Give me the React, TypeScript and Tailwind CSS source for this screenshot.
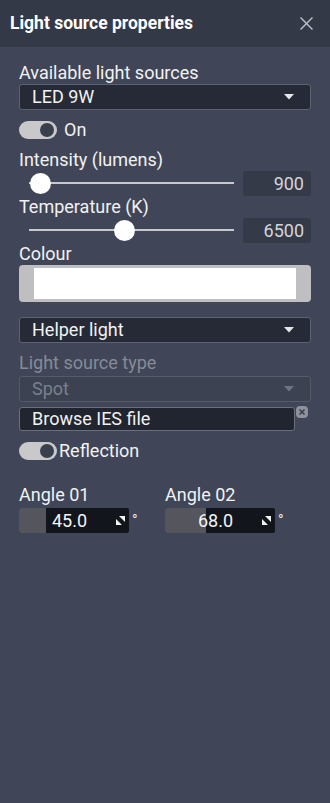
import React from "react";

const font = { fontFamily: "Roboto, 'Noto Sans', sans-serif" };

function Caret({ dim }: { dim?: boolean }) {
  return (
    <svg width="10" height="6" viewBox="0 0 10 6" className="shrink-0">
      <polygon points="0,0 10,0 5,5.5" fill={dim ? "#6f7480" : "#e6e7ea"} />
    </svg>
  );
}

function Select({ text, dim }: { text: string; dim?: boolean }) {
  return (
    <div
      className={
        "h-[26px] w-full rounded-[3px] border flex items-center pl-[12px] pr-[16px] justify-between " +
        (dim ? "border-[#545a68] bg-[#3c4252]" : "border-[#5d6270] bg-[#252a36]")
      }
    >
      <span className={"text-[18px] leading-[20px] " + (dim ? "text-[#7b808b]" : "text-[#f2f2f2]")}>{text}</span>
      <Caret dim={dim} />
    </div>
  );
}

function Toggle() {
  return (
    <div className="relative w-[38px] h-[18px] rounded-full bg-[#c9c9cb] shrink-0">
      <div className="absolute right-[1px] top-[0px] w-[18px] h-[18px] rounded-full bg-[#3a3f4c] border-[2px] border-[#c9c9cb]" />
    </div>
  );
}

function Slider({ pos, value }: { pos: number; value: string }) {
  return (
    <div className="flex items-center h-[25px]">
      <div className="relative w-[224px] h-[25px]">
        <div className="absolute left-[10px] right-[9px] top-[11px] h-[2px] bg-[#c8c9cd]" />
        <div
          className="absolute top-[2px] w-[21px] h-[21px] rounded-full bg-white"
          style={{ left: pos - 10.5 - 19 }}
        />
      </div>
      <div className="ml-auto w-[68px] h-[25px] rounded-[3px] bg-[#353a48] flex items-center justify-end pr-[7px] text-[18px] leading-[20px] text-[#d4d5d8]">
        {value}
      </div>
    </div>
  );
}

function Spinner() {
  return (
    <svg width="9" height="9" viewBox="0 0 9 9" className="shrink-0">
      <polygon points="3,0 9,0 9,6" fill="#f2f2f2" />
      <polygon points="0,3 0,9 6,9" fill="#f2f2f2" />
    </svg>
  );
}

function AngleInput({ label, value, fill }: { label: string; value: string; fill: number }) {
  return (
    <div className="flex flex-col w-[148px]">
      <div className="text-[18px] leading-[20px] text-[#f2f2f2] h-[20px]">{label}</div>
      <div className="mt-[3px] flex items-center">
        <div className="relative w-[110px] h-[25px] rounded-[2px] bg-[#13151c] overflow-hidden flex items-center">
          <div className="absolute left-0 top-0 bottom-0 bg-[#55565d]" style={{ width: fill }} />
          <div className="relative flex-1 text-center text-[18px] leading-[20px] text-[#f5f5f5] pl-[4px]">{value}</div>
          <div className="relative mr-[4px]">
            <Spinner />
          </div>
        </div>
        <span className="ml-[3px] text-[15px] leading-[15px] text-[#e8e8e8]">°</span>
      </div>
    </div>
  );
}

export default function App() {
  return (
    <div className="w-[330px] h-[803px] bg-[#404657] flex flex-col overflow-hidden" style={font}>
      <div className="h-[47px] bg-[#343947] flex items-center justify-between pl-[10px] pr-[17px] shrink-0">
        <span className="text-[17.5px] font-bold text-white leading-[20px] -mt-[2px]">Light source properties</span>
        <svg width="13" height="13" viewBox="0 0 13 13" className="-mt-[1px]">
          <line x1="0.5" y1="0.5" x2="12.5" y2="12.5" stroke="#b9bcc3" strokeWidth="1.5" />
          <line x1="12.5" y1="0.5" x2="0.5" y2="12.5" stroke="#b9bcc3" strokeWidth="1.5" />
        </svg>
      </div>

      <div className="flex flex-col pl-[19px] pr-[19px] pt-[16px]">
        <div className="text-[18px] leading-[20px] text-[#f2f2f2]">Available light sources</div>
        <div className="mt-[1px]">
          <Select text="LED 9W" />
        </div>
        <div className="mt-[11px] flex items-center gap-[7px] h-[18px]">
          <Toggle />
          <span className="text-[18px] leading-[20px] text-[#f2f2f2]">On</span>
        </div>

        <div className="mt-[11px] text-[18px] leading-[20px] text-[#f2f2f2]">Intensity (lumens)</div>
        <div className="mt-[1px]">
          <Slider pos={40.5} value="900" />
        </div>
        <div className="mt-[1px] text-[18px] leading-[20px] text-[#f2f2f2]">Temperature (K)</div>
        <div className="mt-[1px]">
          <Slider pos={124.5} value="6500" />
        </div>

        <div className="mt-[1px] text-[18px] leading-[20px] text-[#f2f2f2]">Colour</div>
        <div className="mt-[1px] h-[37px] w-full rounded-[4px] bg-[#bfbfc1] flex items-center px-[15px]">
          <div className="h-[31px] w-full bg-white" />
        </div>

        <div className="mt-[15px]">
          <Select text="Helper light" />
        </div>

        <div className="mt-[10px] text-[18px] leading-[20px] text-[#868b96]">Light source type</div>
        <div className="mt-[3px]">
          <Select text="Spot" dim />
        </div>

        <div className="mt-[5px] flex items-start">
          <div className="w-[276px] h-[24px] rounded-[3px] border border-[#6a6f7b] bg-[#21252f] flex items-center pl-[12px]">
            <span className="text-[18px] leading-[20px] text-[#f2f2f2]">Browse IES file</span>
          </div>
          <svg width="12" height="12" viewBox="0 0 12 12" className="ml-[1px] -mt-[1px]">
            <rect x="0" y="0" width="12" height="12" rx="4" fill="#8e919a" />
            <line x1="3.5" y1="3.5" x2="8.5" y2="8.5" stroke="#3b404d" strokeWidth="1.6" />
            <line x1="8.5" y1="3.5" x2="3.5" y2="8.5" stroke="#3b404d" strokeWidth="1.6" />
          </svg>
        </div>

        <div className="mt-[10px] flex items-center gap-[2px] h-[19px]">
          <Toggle />
          <span className="text-[18px] leading-[20px] text-[#f2f2f2]">Reflection</span>
        </div>

        <div className="mt-[25px] flex">
          <AngleInput label="Angle 01" value="45.0" fill={27} />
          <AngleInput label="Angle 02" value="68.0" fill={41} />
        </div>
      </div>
    </div>
  );
}
